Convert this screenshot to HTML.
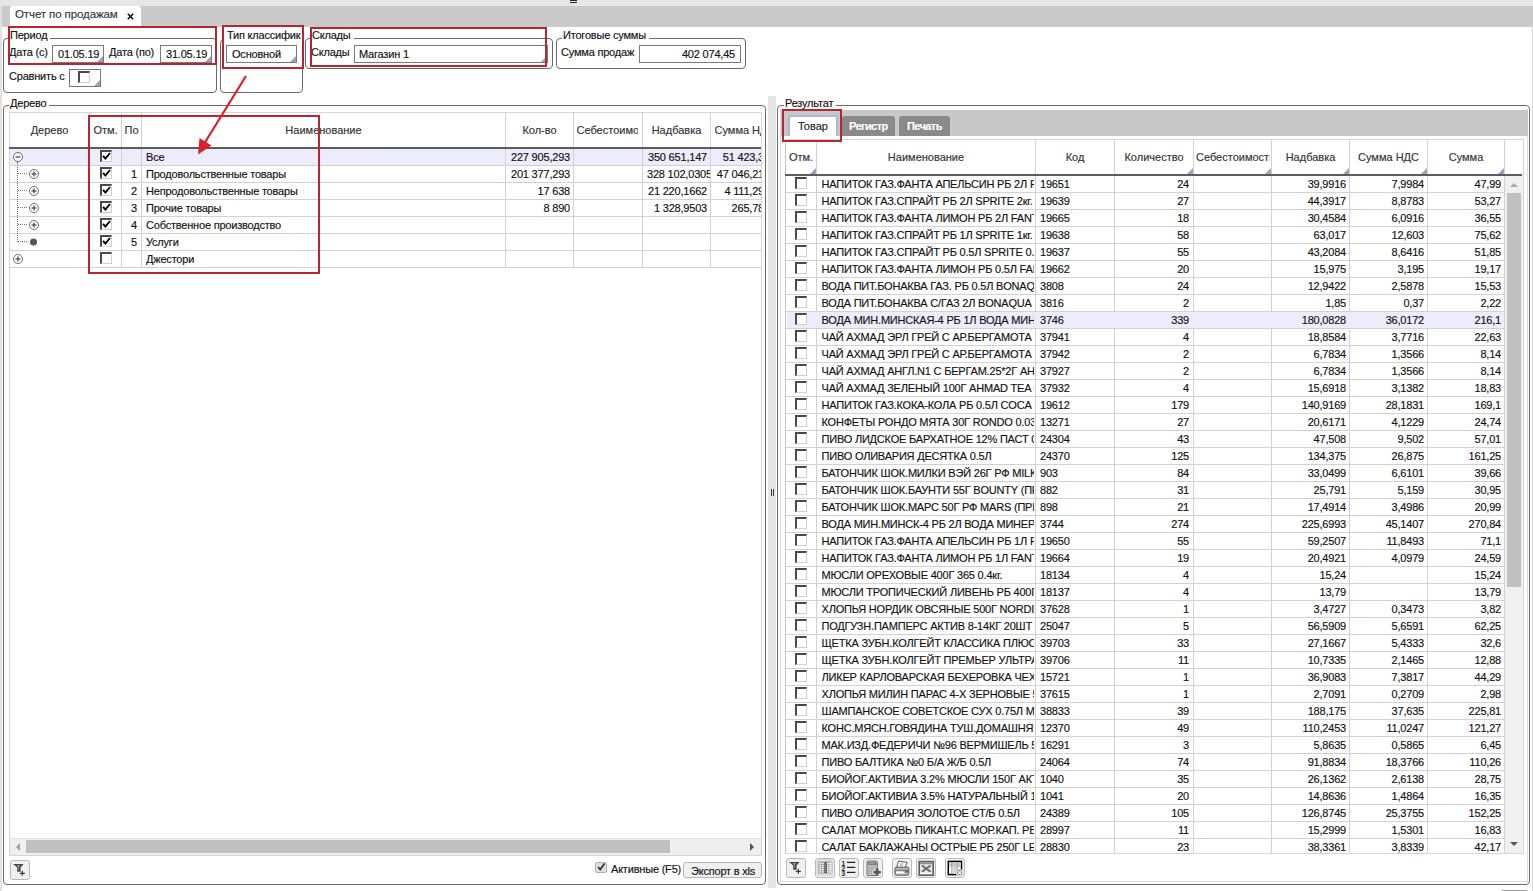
<!DOCTYPE html><html><head><meta charset="utf-8"><style>
*{box-sizing:border-box;margin:0;padding:0}
html,body{width:1533px;height:891px;overflow:hidden;background:#fff}
body{position:relative;font-family:"Liberation Sans",sans-serif;font-size:11px;letter-spacing:-0.2px;color:#111;-webkit-text-stroke:0.15px currentColor}
.ab{position:absolute}
.t{position:absolute;white-space:nowrap;line-height:13px}
.fs{position:absolute;border:1px solid #6a6a6a;border-radius:4px}
.lg{position:absolute;background:#fff;white-space:nowrap;line-height:13px;padding:0 3px 0 1px}
.inp{position:absolute;border:1px solid #7a7a7a;background:#fff;line-height:17px;white-space:nowrap;overflow:hidden}
.tri{position:absolute;right:0;bottom:0;width:0;height:0;border-style:solid;border-width:0 0 6px 6px;border-color:transparent transparent #8fa6c4 transparent}
.red{position:absolute;border:2px solid #b7262e}
.hl{position:absolute;background:#d2d2d2}
.vl{position:absolute;background:#d2d2d2}
.hd{position:absolute;color:#333;text-align:center;line-height:13px;white-space:nowrap;overflow:hidden;letter-spacing:0}
.c{position:absolute;line-height:13px;white-space:nowrap;overflow:hidden}
.r{text-align:right}
.cb{position:absolute;width:12px;height:12px;background:#fff;border-top:2px solid #4a4a4a;border-left:2px solid #4a4a4a;border-right:1px solid #cfcfcf;border-bottom:1px solid #cfcfcf}
.btn{position:absolute;background:#f0f0f0;border:1px solid #b8b8b8;border-radius:3px}
</style></head><body>
<div class="ab" style="left:0;top:0;width:1533px;height:6px;background:#e6e6e6"></div>
<div class="ab" style="left:570px;top:0;width:7px;height:1px;background:#222"></div>
<div class="ab" style="left:570px;top:2px;width:7px;height:1px;background:#222"></div>
<div class="ab" style="left:1px;top:6px;width:1532px;height:20.5px;background:#cacaca"></div>
<div class="ab" style="left:0;top:6px;width:1.5px;height:885px;background:#e2e2e2"></div>
<div class="ab" style="left:1532px;top:26px;width:1px;height:865px;background:#d8d8d8"></div>
<div class="ab" style="left:10px;top:6px;width:131px;height:20px;background:#fff;border-radius:3px 3px 0 0"></div>
<div class="t" style="left:15px;top:7px;font-size:11.5px;letter-spacing:-0.1px;color:#2e3640;line-height:14px">Отчет по продажам</div>
<svg class="ab" style="left:127px;top:13px" width="7" height="7" viewBox="0 0 7 7"><path d="M0.8 0.8L6.2 6.2M6.2 0.8L0.8 6.2" stroke="#111" stroke-width="1.6"/></svg>
<div class="fs" style="left:3px;top:38px;width:214px;height:55px"></div>
<div class="lg" style="left:9px;top:29px">Период</div>
<div class="t" style="left:9px;top:46px">Дата (с)</div>
<div class="inp" style="left:52px;top:45px;width:52px;height:18px;text-align:left;padding:0 5px">01.05.19<div class="tri"></div></div>
<div class="t" style="left:109px;top:46px">Дата (по)</div>
<div class="inp" style="left:160px;top:45px;width:52px;height:18px;text-align:left;padding:0 5px">31.05.19<div class="tri"></div></div>
<div class="t" style="left:9px;top:70px">Сравнить с</div>
<div class="inp" style="left:69px;top:69px;width:32px;height:18px;text-align:left;padding:0 0px"><div class="tri"></div></div>
<div class="cb" style="left:78px;top:71px;width:12px;height:12px"></div>
<div class="fs" style="left:220px;top:39px;width:83px;height:54px"></div>
<div class="lg" style="left:224px;top:29px;width:78px;padding:0 0 0 3px;overflow:hidden">Тип классифик</div>
<div class="inp" style="left:226px;top:45px;width:71px;height:18px;text-align:left;padding:0 5px">Основной<div class="tri"></div></div>
<div class="fs" style="left:305px;top:38px;width:248px;height:31px"></div>
<div class="lg" style="left:311px;top:29px">Склады</div>
<div class="t" style="left:311px;top:46px">Склады</div>
<div class="inp" style="left:354px;top:45px;width:194px;height:18px;text-align:left;padding:0 4px">Магазин 1<div class="tri"></div></div>
<div class="fs" style="left:556px;top:38px;width:190px;height:31px"></div>
<div class="lg" style="left:562px;top:29px">Итоговые суммы</div>
<div class="t" style="left:561px;top:46px">Сумма продаж</div>
<div class="inp" style="left:639px;top:45px;width:102px;height:18px;text-align:right;padding:0 5px">402 074,45</div>
<div class="fs" style="left:3px;top:105px;width:763px;height:780px"></div>
<div class="lg" style="left:9px;top:97px">Дерево</div>
<div class="ab" style="left:9px;top:112px;width:753px;height:744px;border:1px solid #d6d6d6;border-right:1px solid #d6d6d6;background:#fff"></div>
<div class="ab" style="left:9px;top:147px;width:752px;height:2px;background:#5c5c5c"></div>
<div class="ab" style="left:10px;top:149px;width:751px;height:16px;background:#ececfa"></div>
<div class="hd" style="left:10px;top:124px;width:79px;">Дерево</div>
<div class="hd" style="left:90px;top:124px;width:31px;">Отм.</div>
<div class="hd" style="left:122px;top:124px;width:19px;">По</div>
<div class="hd" style="left:142px;top:124px;width:363px;">Наименование</div>
<div class="hd" style="left:506px;top:124px;width:67px;">Кол-во</div>
<div class="hd" style="left:643px;top:124px;width:67px;">Надбавка</div>
<div class="hd" style="left:576.5px;top:124px;width:61.5px;text-align:left">Себестоимость</div>
<div class="hd" style="left:714.5px;top:124px;width:46.5px;text-align:left">Сумма НДС</div>
<div class="vl" style="left:89px;top:113px;width:1px;height:34px"></div>
<div class="vl" style="left:89px;top:149px;width:1px;height:118px"></div>
<div class="vl" style="left:121px;top:113px;width:1px;height:34px"></div>
<div class="vl" style="left:121px;top:149px;width:1px;height:118px"></div>
<div class="vl" style="left:141px;top:113px;width:1px;height:34px"></div>
<div class="vl" style="left:141px;top:149px;width:1px;height:118px"></div>
<div class="vl" style="left:505px;top:113px;width:1px;height:34px"></div>
<div class="vl" style="left:505px;top:149px;width:1px;height:118px"></div>
<div class="vl" style="left:573px;top:113px;width:1px;height:34px"></div>
<div class="vl" style="left:573px;top:149px;width:1px;height:118px"></div>
<div class="vl" style="left:642px;top:113px;width:1px;height:34px"></div>
<div class="vl" style="left:642px;top:149px;width:1px;height:118px"></div>
<div class="vl" style="left:710px;top:113px;width:1px;height:34px"></div>
<div class="vl" style="left:710px;top:149px;width:1px;height:118px"></div>
<div class="hl" style="left:10px;top:165px;width:751px;height:1px"></div>
<div class="hl" style="left:10px;top:182px;width:751px;height:1px"></div>
<div class="hl" style="left:10px;top:199px;width:751px;height:1px"></div>
<div class="hl" style="left:10px;top:216px;width:751px;height:1px"></div>
<div class="hl" style="left:10px;top:233px;width:751px;height:1px"></div>
<div class="hl" style="left:10px;top:250px;width:751px;height:1px"></div>
<div class="hl" style="left:10px;top:267px;width:751px;height:1px"></div>
<svg class="ab" style="left:11.5px;top:150.5px" width="12" height="12" viewBox="0 0 12 12"><circle cx="6" cy="6" r="4.5" fill="#fff" stroke="#6e6e6e" stroke-width="1"/><path d="M3.5 6H8.5" stroke="#444" stroke-width="1.2"/></svg>
<div class="cb" style="left:100px;top:150px"></div>
<svg class="ab" style="left:102px;top:152px" width="9" height="8" viewBox="0 0 9 8"><path d="M1 3.8L3.4 6.5L8 1" fill="none" stroke="#000" stroke-width="1.9"/></svg>
<div class="c" style="left:146px;top:151px;width:358px">Все</div>
<div class="c r" style="left:506px;top:151px;width:64px">227 905,293</div>
<div class="c r" style="left:643px;top:151px;width:64px">350 651,147</div>
<svg class="ab" style="left:27.5px;top:167.5px" width="12" height="12" viewBox="0 0 12 12"><circle cx="6" cy="6" r="4.5" fill="#fff" stroke="#6e6e6e" stroke-width="1"/><path d="M3.5 6H8.5" stroke="#444" stroke-width="1.2"/><path d="M6 3.5V8.5" stroke="#444" stroke-width="1.2"/></svg>
<div class="cb" style="left:100px;top:167px"></div>
<svg class="ab" style="left:102px;top:169px" width="9" height="8" viewBox="0 0 9 8"><path d="M1 3.8L3.4 6.5L8 1" fill="none" stroke="#000" stroke-width="1.9"/></svg>
<div class="c r" style="left:122px;top:168px;width:15px">1</div>
<div class="c" style="left:146px;top:168px;width:358px">Продовольственные товары</div>
<div class="c r" style="left:506px;top:168px;width:64px">201 377,293</div>
<div class="c" style="left:647px;top:168px;width:63px">328 102,0305</div>
<svg class="ab" style="left:27.5px;top:184.5px" width="12" height="12" viewBox="0 0 12 12"><circle cx="6" cy="6" r="4.5" fill="#fff" stroke="#6e6e6e" stroke-width="1"/><path d="M3.5 6H8.5" stroke="#444" stroke-width="1.2"/><path d="M6 3.5V8.5" stroke="#444" stroke-width="1.2"/></svg>
<div class="cb" style="left:100px;top:184px"></div>
<svg class="ab" style="left:102px;top:186px" width="9" height="8" viewBox="0 0 9 8"><path d="M1 3.8L3.4 6.5L8 1" fill="none" stroke="#000" stroke-width="1.9"/></svg>
<div class="c r" style="left:122px;top:185px;width:15px">2</div>
<div class="c" style="left:146px;top:185px;width:358px">Непродовольственные товары</div>
<div class="c r" style="left:506px;top:185px;width:64px">17 638</div>
<div class="c r" style="left:643px;top:185px;width:64px">21 220,1662</div>
<svg class="ab" style="left:27.5px;top:201.5px" width="12" height="12" viewBox="0 0 12 12"><circle cx="6" cy="6" r="4.5" fill="#fff" stroke="#6e6e6e" stroke-width="1"/><path d="M3.5 6H8.5" stroke="#444" stroke-width="1.2"/><path d="M6 3.5V8.5" stroke="#444" stroke-width="1.2"/></svg>
<div class="cb" style="left:100px;top:201px"></div>
<svg class="ab" style="left:102px;top:203px" width="9" height="8" viewBox="0 0 9 8"><path d="M1 3.8L3.4 6.5L8 1" fill="none" stroke="#000" stroke-width="1.9"/></svg>
<div class="c r" style="left:122px;top:202px;width:15px">3</div>
<div class="c" style="left:146px;top:202px;width:358px">Прочие товары</div>
<div class="c r" style="left:506px;top:202px;width:64px">8 890</div>
<div class="c r" style="left:643px;top:202px;width:64px">1 328,9503</div>
<svg class="ab" style="left:27.5px;top:218.5px" width="12" height="12" viewBox="0 0 12 12"><circle cx="6" cy="6" r="4.5" fill="#fff" stroke="#6e6e6e" stroke-width="1"/><path d="M3.5 6H8.5" stroke="#444" stroke-width="1.2"/><path d="M6 3.5V8.5" stroke="#444" stroke-width="1.2"/></svg>
<div class="cb" style="left:100px;top:218px"></div>
<svg class="ab" style="left:102px;top:220px" width="9" height="8" viewBox="0 0 9 8"><path d="M1 3.8L3.4 6.5L8 1" fill="none" stroke="#000" stroke-width="1.9"/></svg>
<div class="c r" style="left:122px;top:219px;width:15px">4</div>
<div class="c" style="left:146px;top:219px;width:358px">Собственное производство</div>
<svg class="ab" style="left:28px;top:235.5px" width="12" height="12" viewBox="0 0 12 12"><circle cx="5.5" cy="6" r="3.5" fill="#555"/></svg>
<div class="cb" style="left:100px;top:235px"></div>
<svg class="ab" style="left:102px;top:237px" width="9" height="8" viewBox="0 0 9 8"><path d="M1 3.8L3.4 6.5L8 1" fill="none" stroke="#000" stroke-width="1.9"/></svg>
<div class="c r" style="left:122px;top:236px;width:15px">5</div>
<div class="c" style="left:146px;top:236px;width:358px">Услуги</div>
<svg class="ab" style="left:11.5px;top:252.5px" width="12" height="12" viewBox="0 0 12 12"><circle cx="6" cy="6" r="4.5" fill="#fff" stroke="#6e6e6e" stroke-width="1"/><path d="M3.5 6H8.5" stroke="#444" stroke-width="1.2"/><path d="M6 3.5V8.5" stroke="#444" stroke-width="1.2"/></svg>
<div class="cb" style="left:100px;top:252px"></div>
<div class="c" style="left:146px;top:253px;width:358px">Джестори</div>
<div class="c" style="left:711px;top:151px;width:50px;height:14px"><div style="position:absolute;left:0;top:0;text-align:right;width:53px">51 423,3</div></div>
<div class="c" style="left:711px;top:168px;width:50px;height:14px"><div style="position:absolute;left:0;top:0;text-align:right;width:53px">47 046,21</div></div>
<div class="c" style="left:711px;top:185px;width:50px;height:14px"><div style="position:absolute;left:0;top:0;text-align:right;width:53px">4 111,29</div></div>
<div class="c" style="left:711px;top:202px;width:50px;height:14px"><div style="position:absolute;left:0;top:0;text-align:right;width:53px">265,78</div></div>
<div class="ab" style="left:17px;top:162px;width:1px;height:80px;border-left:1px dotted #777"></div>
<div class="ab" style="left:18px;top:173px;width:9px;height:1px;border-top:1px dotted #777"></div>
<div class="ab" style="left:18px;top:190px;width:9px;height:1px;border-top:1px dotted #777"></div>
<div class="ab" style="left:18px;top:207px;width:9px;height:1px;border-top:1px dotted #777"></div>
<div class="ab" style="left:18px;top:224px;width:9px;height:1px;border-top:1px dotted #777"></div>
<div class="ab" style="left:18px;top:241px;width:9px;height:1px;border-top:1px dotted #777"></div>
<div class="ab" style="left:10px;top:838px;width:751px;height:17px;background:#efefef;border-top:1px solid #e2e2e2"></div>
<div class="ab" style="left:26px;top:840px;width:644px;height:13px;background:#c0c0c0"></div>
<svg class="ab" style="left:14px;top:842px" width="8" height="10" viewBox="0 0 8 10"><path d="M6 1L2 5L6 9Z" fill="#a0a0a0"/></svg>
<svg class="ab" style="left:748px;top:842px" width="8" height="10" viewBox="0 0 8 10"><path d="M2 1L6 5L2 9Z" fill="#555"/></svg>
<div class="btn" style="left:10px;top:860px;width:20px;height:20px"></div>
<svg class="ab" style="left:10px;top:860px" width="20" height="20" viewBox="0 0 20 20"><path d="M3 4H13.6L10.6 7.6V11.8H7.2V7.6Z" fill="#3f4b4a"/><path d="M6.8 5.2H10L8.8 6.8V9.5H8.2V6.8Z" fill="#a9b4b3"/><path d="M9.8 13.3H14.8M12.3 10.8V15.8" stroke="#333" stroke-width="1.2"/></svg>
<div class="ab" style="left:595px;top:862px;width:12px;height:11px;background:#e0e0e0;border:1px solid #b0b0b0;border-radius:2px"></div>
<svg class="ab" style="left:596px;top:862px" width="10" height="10" viewBox="0 0 10 10"><path d="M2 5L4.2 7.5L8.5 1.5" fill="none" stroke="#333" stroke-width="1.8"/></svg>
<div class="t" style="left:611px;top:863px">Активные (F5)</div>
<div class="btn" style="left:683px;top:862px;width:79px;height:16px"></div>
<div class="t" style="left:691px;top:865px">Экспорт в xls</div>
<div class="ab" style="left:768px;top:96px;width:8px;height:792px;background:#e6e6e6"></div>
<div class="ab" style="left:771px;top:489px;width:1px;height:7px;background:#333"></div>
<div class="ab" style="left:773px;top:489px;width:1px;height:7px;background:#333"></div>
<div class="fs" style="left:777px;top:105px;width:753px;height:780px"></div>
<div class="lg" style="left:784px;top:97px">Результат</div>
<div class="ab" style="left:780px;top:109px;width:748px;height:773px;border:1px solid #dcdcdc;border-top:none"></div>
<div class="ab" style="left:781px;top:110px;width:747px;height:26px;background:#c8c8c8"></div>
<div class="ab" style="left:788px;top:115px;width:50px;height:21px;background:#fff;border:2px solid #a9b9de;border-bottom:none;border-radius:3px 3px 0 0"></div>
<div class="t" style="left:798px;top:120px;color:#222;letter-spacing:0">Товар</div>
<div class="ab" style="left:842px;top:116px;width:53px;height:20px;background:#8a8a8a;border-radius:3px 3px 0 0"></div>
<div class="t" style="left:849px;top:120px;color:#fff;font-weight:bold;letter-spacing:-0.6px">Регистр</div>
<div class="ab" style="left:899px;top:116px;width:51px;height:20px;background:#8a8a8a;border-radius:3px 3px 0 0"></div>
<div class="t" style="left:907px;top:120px;color:#fff;font-weight:bold;letter-spacing:-0.6px">Печать</div>
<div class="ab" style="left:785px;top:139px;width:739px;height:715px;border:1px solid #d6d6d6;border-left:1px solid #c4c4c4"></div>
<div class="ab" style="left:785px;top:174px;width:737px;height:2px;background:#5c5c5c"></div>
<div class="hd" style="left:786px;top:151px;width:30px">Отм.</div>
<div class="tri" style="left:810px;top:168px;right:auto;bottom:auto"></div>
<div class="hd" style="left:817px;top:151px;width:218px">Наименование</div>
<div class="hd" style="left:1036px;top:151px;width:78px">Код</div>
<div class="hd" style="left:1115px;top:151px;width:78px">Количество</div>
<div class="tri" style="left:1187px;top:168px;right:auto;bottom:auto"></div>
<div class="hd" style="left:1196px;top:151px;width:74px;text-align:left">Себестоимость</div>
<div class="tri" style="left:1265px;top:168px;right:auto;bottom:auto"></div>
<div class="hd" style="left:1272px;top:151px;width:77px">Надбавка</div>
<div class="tri" style="left:1343px;top:168px;right:auto;bottom:auto"></div>
<div class="hd" style="left:1350px;top:151px;width:77px">Сумма НДС</div>
<div class="tri" style="left:1421px;top:168px;right:auto;bottom:auto"></div>
<div class="hd" style="left:1428px;top:151px;width:76px">Сумма</div>
<div class="tri" style="left:1498px;top:168px;right:auto;bottom:auto"></div>
<div class="vl" style="left:816px;top:140px;width:1px;height:34px"></div>
<div class="vl" style="left:816px;top:176px;width:1px;height:677px"></div>
<div class="vl" style="left:1035px;top:140px;width:1px;height:34px"></div>
<div class="vl" style="left:1035px;top:176px;width:1px;height:677px"></div>
<div class="vl" style="left:1114px;top:140px;width:1px;height:34px"></div>
<div class="vl" style="left:1114px;top:176px;width:1px;height:677px"></div>
<div class="vl" style="left:1193px;top:140px;width:1px;height:34px"></div>
<div class="vl" style="left:1193px;top:176px;width:1px;height:677px"></div>
<div class="vl" style="left:1271px;top:140px;width:1px;height:34px"></div>
<div class="vl" style="left:1271px;top:176px;width:1px;height:677px"></div>
<div class="vl" style="left:1349px;top:140px;width:1px;height:34px"></div>
<div class="vl" style="left:1349px;top:176px;width:1px;height:677px"></div>
<div class="vl" style="left:1427px;top:140px;width:1px;height:34px"></div>
<div class="vl" style="left:1427px;top:176px;width:1px;height:677px"></div>
<div class="vl" style="left:1504px;top:140px;width:1px;height:34px"></div>
<div class="vl" style="left:1504px;top:176px;width:1px;height:677px"></div>
<div class="ab" style="left:787px;top:312px;width:717px;height:17px;background:#ececfa"></div>
<div class="hl" style="left:786px;top:192px;width:718px;height:1px"></div>
<div class="cb" style="left:795px;top:177px;width:12px;height:12px"></div>
<div class="c" style="left:821.5px;top:178px;width:212.5px">НАПИТОК ГАЗ.ФАНТА АПЕЛЬСИН РБ 2Л FANTA 2кг.</div>
<div class="c" style="left:1040px;top:178px;width:74px">19651</div>
<div class="c r" style="left:1115px;top:178px;width:74px">24</div>
<div class="c r" style="left:1272px;top:178px;width:74px">39,9916</div>
<div class="c r" style="left:1350px;top:178px;width:74px">7,9984</div>
<div class="c r" style="left:1428px;top:178px;width:73px">47,99</div>
<div class="hl" style="left:786px;top:209px;width:718px;height:1px"></div>
<div class="cb" style="left:795px;top:194px;width:12px;height:12px"></div>
<div class="c" style="left:821.5px;top:195px;width:212.5px">НАПИТОК ГАЗ.СПРАЙТ РБ 2Л SPRITE 2кг. </div>
<div class="c" style="left:1040px;top:195px;width:74px">19639</div>
<div class="c r" style="left:1115px;top:195px;width:74px">27</div>
<div class="c r" style="left:1272px;top:195px;width:74px">44,3917</div>
<div class="c r" style="left:1350px;top:195px;width:74px">8,8783</div>
<div class="c r" style="left:1428px;top:195px;width:73px">53,27</div>
<div class="hl" style="left:786px;top:226px;width:718px;height:1px"></div>
<div class="cb" style="left:795px;top:211px;width:12px;height:12px"></div>
<div class="c" style="left:821.5px;top:212px;width:212.5px">НАПИТОК ГАЗ.ФАНТА ЛИМОН РБ 2Л FANTA</div>
<div class="c" style="left:1040px;top:212px;width:74px">19665</div>
<div class="c r" style="left:1115px;top:212px;width:74px">18</div>
<div class="c r" style="left:1272px;top:212px;width:74px">30,4584</div>
<div class="c r" style="left:1350px;top:212px;width:74px">6,0916</div>
<div class="c r" style="left:1428px;top:212px;width:73px">36,55</div>
<div class="hl" style="left:786px;top:243px;width:718px;height:1px"></div>
<div class="cb" style="left:795px;top:228px;width:12px;height:12px"></div>
<div class="c" style="left:821.5px;top:229px;width:212.5px">НАПИТОК ГАЗ.СПРАЙТ РБ 1Л SPRITE 1кг.</div>
<div class="c" style="left:1040px;top:229px;width:74px">19638</div>
<div class="c r" style="left:1115px;top:229px;width:74px">58</div>
<div class="c r" style="left:1272px;top:229px;width:74px">63,017</div>
<div class="c r" style="left:1350px;top:229px;width:74px">12,603</div>
<div class="c r" style="left:1428px;top:229px;width:73px">75,62</div>
<div class="hl" style="left:786px;top:260px;width:718px;height:1px"></div>
<div class="cb" style="left:795px;top:245px;width:12px;height:12px"></div>
<div class="c" style="left:821.5px;top:246px;width:212.5px">НАПИТОК ГАЗ.СПРАЙТ РБ 0.5Л SPRITE 0.5кг.</div>
<div class="c" style="left:1040px;top:246px;width:74px">19637</div>
<div class="c r" style="left:1115px;top:246px;width:74px">55</div>
<div class="c r" style="left:1272px;top:246px;width:74px">43,2084</div>
<div class="c r" style="left:1350px;top:246px;width:74px">8,6416</div>
<div class="c r" style="left:1428px;top:246px;width:73px">51,85</div>
<div class="hl" style="left:786px;top:277px;width:718px;height:1px"></div>
<div class="cb" style="left:795px;top:262px;width:12px;height:12px"></div>
<div class="c" style="left:821.5px;top:263px;width:212.5px">НАПИТОК ГАЗ.ФАНТА ЛИМОН РБ 0.5Л FANTA</div>
<div class="c" style="left:1040px;top:263px;width:74px">19662</div>
<div class="c r" style="left:1115px;top:263px;width:74px">20</div>
<div class="c r" style="left:1272px;top:263px;width:74px">15,975</div>
<div class="c r" style="left:1350px;top:263px;width:74px">3,195</div>
<div class="c r" style="left:1428px;top:263px;width:73px">19,17</div>
<div class="hl" style="left:786px;top:294px;width:718px;height:1px"></div>
<div class="cb" style="left:795px;top:279px;width:12px;height:12px"></div>
<div class="c" style="left:821.5px;top:280px;width:212.5px">ВОДА ПИТ.БОНАКВА ГАЗ. РБ 0.5Л BONAQUA</div>
<div class="c" style="left:1040px;top:280px;width:74px">3808</div>
<div class="c r" style="left:1115px;top:280px;width:74px">24</div>
<div class="c r" style="left:1272px;top:280px;width:74px">12,9422</div>
<div class="c r" style="left:1350px;top:280px;width:74px">2,5878</div>
<div class="c r" style="left:1428px;top:280px;width:73px">15,53</div>
<div class="hl" style="left:786px;top:311px;width:718px;height:1px"></div>
<div class="cb" style="left:795px;top:296px;width:12px;height:12px"></div>
<div class="c" style="left:821.5px;top:297px;width:212.5px">ВОДА ПИТ.БОНАКВА С/ГАЗ 2Л BONAQUA 2кг.</div>
<div class="c" style="left:1040px;top:297px;width:74px">3816</div>
<div class="c r" style="left:1115px;top:297px;width:74px">2</div>
<div class="c r" style="left:1272px;top:297px;width:74px">1,85</div>
<div class="c r" style="left:1350px;top:297px;width:74px">0,37</div>
<div class="c r" style="left:1428px;top:297px;width:73px">2,22</div>
<div class="hl" style="left:786px;top:328px;width:718px;height:1px"></div>
<div class="cb" style="left:795px;top:313px;width:12px;height:12px"></div>
<div class="c" style="left:821.5px;top:314px;width:212.5px">ВОДА МИН.МИНСКАЯ-4 РБ 1Л ВОДА МИНЕРАЛЬНАЯ</div>
<div class="c" style="left:1040px;top:314px;width:74px">3746</div>
<div class="c r" style="left:1115px;top:314px;width:74px">339</div>
<div class="c r" style="left:1272px;top:314px;width:74px">180,0828</div>
<div class="c r" style="left:1350px;top:314px;width:74px">36,0172</div>
<div class="c r" style="left:1428px;top:314px;width:73px">216,1</div>
<div class="hl" style="left:786px;top:345px;width:718px;height:1px"></div>
<div class="cb" style="left:795px;top:330px;width:12px;height:12px"></div>
<div class="c" style="left:821.5px;top:331px;width:212.5px">ЧАЙ АХМАД ЭРЛ ГРЕЙ С АР.БЕРГАМОТА 100Г</div>
<div class="c" style="left:1040px;top:331px;width:74px">37941</div>
<div class="c r" style="left:1115px;top:331px;width:74px">4</div>
<div class="c r" style="left:1272px;top:331px;width:74px">18,8584</div>
<div class="c r" style="left:1350px;top:331px;width:74px">3,7716</div>
<div class="c r" style="left:1428px;top:331px;width:73px">22,63</div>
<div class="hl" style="left:786px;top:362px;width:718px;height:1px"></div>
<div class="cb" style="left:795px;top:347px;width:12px;height:12px"></div>
<div class="c" style="left:821.5px;top:348px;width:212.5px">ЧАЙ АХМАД ЭРЛ ГРЕЙ С АР.БЕРГАМОТА 25П</div>
<div class="c" style="left:1040px;top:348px;width:74px">37942</div>
<div class="c r" style="left:1115px;top:348px;width:74px">2</div>
<div class="c r" style="left:1272px;top:348px;width:74px">6,7834</div>
<div class="c r" style="left:1350px;top:348px;width:74px">1,3566</div>
<div class="c r" style="left:1428px;top:348px;width:73px">8,14</div>
<div class="hl" style="left:786px;top:379px;width:718px;height:1px"></div>
<div class="cb" style="left:795px;top:364px;width:12px;height:12px"></div>
<div class="c" style="left:821.5px;top:365px;width:212.5px">ЧАЙ АХМАД АНГЛ.N1 С БЕРГАМ.25*2Г AHMAD</div>
<div class="c" style="left:1040px;top:365px;width:74px">37927</div>
<div class="c r" style="left:1115px;top:365px;width:74px">2</div>
<div class="c r" style="left:1272px;top:365px;width:74px">6,7834</div>
<div class="c r" style="left:1350px;top:365px;width:74px">1,3566</div>
<div class="c r" style="left:1428px;top:365px;width:73px">8,14</div>
<div class="hl" style="left:786px;top:396px;width:718px;height:1px"></div>
<div class="cb" style="left:795px;top:381px;width:12px;height:12px"></div>
<div class="c" style="left:821.5px;top:382px;width:212.5px">ЧАЙ АХМАД ЗЕЛЕНЫЙ 100Г AHMAD TEA 0.1</div>
<div class="c" style="left:1040px;top:382px;width:74px">37932</div>
<div class="c r" style="left:1115px;top:382px;width:74px">4</div>
<div class="c r" style="left:1272px;top:382px;width:74px">15,6918</div>
<div class="c r" style="left:1350px;top:382px;width:74px">3,1382</div>
<div class="c r" style="left:1428px;top:382px;width:73px">18,83</div>
<div class="hl" style="left:786px;top:413px;width:718px;height:1px"></div>
<div class="cb" style="left:795px;top:398px;width:12px;height:12px"></div>
<div class="c" style="left:821.5px;top:399px;width:212.5px">НАПИТОК ГАЗ.КОКА-КОЛА РБ 0.5Л COCA COLA</div>
<div class="c" style="left:1040px;top:399px;width:74px">19612</div>
<div class="c r" style="left:1115px;top:399px;width:74px">179</div>
<div class="c r" style="left:1272px;top:399px;width:74px">140,9169</div>
<div class="c r" style="left:1350px;top:399px;width:74px">28,1831</div>
<div class="c r" style="left:1428px;top:399px;width:73px">169,1</div>
<div class="hl" style="left:786px;top:430px;width:718px;height:1px"></div>
<div class="cb" style="left:795px;top:415px;width:12px;height:12px"></div>
<div class="c" style="left:821.5px;top:416px;width:212.5px">КОНФЕТЫ РОНДО МЯТА 30Г RONDO 0.03кг.</div>
<div class="c" style="left:1040px;top:416px;width:74px">13271</div>
<div class="c r" style="left:1115px;top:416px;width:74px">27</div>
<div class="c r" style="left:1272px;top:416px;width:74px">20,6171</div>
<div class="c r" style="left:1350px;top:416px;width:74px">4,1229</div>
<div class="c r" style="left:1428px;top:416px;width:73px">24,74</div>
<div class="hl" style="left:786px;top:447px;width:718px;height:1px"></div>
<div class="cb" style="left:795px;top:432px;width:12px;height:12px"></div>
<div class="c" style="left:821.5px;top:433px;width:212.5px">ПИВО ЛИДСКОЕ БАРХАТНОЕ 12% ПАСТ 0.5Л</div>
<div class="c" style="left:1040px;top:433px;width:74px">24304</div>
<div class="c r" style="left:1115px;top:433px;width:74px">43</div>
<div class="c r" style="left:1272px;top:433px;width:74px">47,508</div>
<div class="c r" style="left:1350px;top:433px;width:74px">9,502</div>
<div class="c r" style="left:1428px;top:433px;width:73px">57,01</div>
<div class="hl" style="left:786px;top:464px;width:718px;height:1px"></div>
<div class="cb" style="left:795px;top:449px;width:12px;height:12px"></div>
<div class="c" style="left:821.5px;top:450px;width:212.5px">ПИВО ОЛИВАРИЯ ДЕСЯТКА 0.5Л</div>
<div class="c" style="left:1040px;top:450px;width:74px">24370</div>
<div class="c r" style="left:1115px;top:450px;width:74px">125</div>
<div class="c r" style="left:1272px;top:450px;width:74px">134,375</div>
<div class="c r" style="left:1350px;top:450px;width:74px">26,875</div>
<div class="c r" style="left:1428px;top:450px;width:73px">161,25</div>
<div class="hl" style="left:786px;top:481px;width:718px;height:1px"></div>
<div class="cb" style="left:795px;top:466px;width:12px;height:12px"></div>
<div class="c" style="left:821.5px;top:467px;width:212.5px">БАТОНЧИК ШОК.МИЛКИ ВЭЙ 26Г РФ MILKY WAY</div>
<div class="c" style="left:1040px;top:467px;width:74px">903</div>
<div class="c r" style="left:1115px;top:467px;width:74px">84</div>
<div class="c r" style="left:1272px;top:467px;width:74px">33,0499</div>
<div class="c r" style="left:1350px;top:467px;width:74px">6,6101</div>
<div class="c r" style="left:1428px;top:467px;width:73px">39,66</div>
<div class="hl" style="left:786px;top:498px;width:718px;height:1px"></div>
<div class="cb" style="left:795px;top:483px;width:12px;height:12px"></div>
<div class="c" style="left:821.5px;top:484px;width:212.5px">БАТОНЧИК ШОК.БАУНТИ 55Г BOUNTY (ПРИ)</div>
<div class="c" style="left:1040px;top:484px;width:74px">882</div>
<div class="c r" style="left:1115px;top:484px;width:74px">31</div>
<div class="c r" style="left:1272px;top:484px;width:74px">25,791</div>
<div class="c r" style="left:1350px;top:484px;width:74px">5,159</div>
<div class="c r" style="left:1428px;top:484px;width:73px">30,95</div>
<div class="hl" style="left:786px;top:515px;width:718px;height:1px"></div>
<div class="cb" style="left:795px;top:500px;width:12px;height:12px"></div>
<div class="c" style="left:821.5px;top:501px;width:212.5px">БАТОНЧИК ШОК.МАРС 50Г РФ MARS (ПРИ)</div>
<div class="c" style="left:1040px;top:501px;width:74px">898</div>
<div class="c r" style="left:1115px;top:501px;width:74px">21</div>
<div class="c r" style="left:1272px;top:501px;width:74px">17,4914</div>
<div class="c r" style="left:1350px;top:501px;width:74px">3,4986</div>
<div class="c r" style="left:1428px;top:501px;width:73px">20,99</div>
<div class="hl" style="left:786px;top:532px;width:718px;height:1px"></div>
<div class="cb" style="left:795px;top:517px;width:12px;height:12px"></div>
<div class="c" style="left:821.5px;top:518px;width:212.5px">ВОДА МИН.МИНСК-4 РБ 2Л ВОДА МИНЕРАЛЬНАЯ</div>
<div class="c" style="left:1040px;top:518px;width:74px">3744</div>
<div class="c r" style="left:1115px;top:518px;width:74px">274</div>
<div class="c r" style="left:1272px;top:518px;width:74px">225,6993</div>
<div class="c r" style="left:1350px;top:518px;width:74px">45,1407</div>
<div class="c r" style="left:1428px;top:518px;width:73px">270,84</div>
<div class="hl" style="left:786px;top:549px;width:718px;height:1px"></div>
<div class="cb" style="left:795px;top:534px;width:12px;height:12px"></div>
<div class="c" style="left:821.5px;top:535px;width:212.5px">НАПИТОК ГАЗ.ФАНТА АПЕЛЬСИН РБ 1Л FANTA</div>
<div class="c" style="left:1040px;top:535px;width:74px">19650</div>
<div class="c r" style="left:1115px;top:535px;width:74px">55</div>
<div class="c r" style="left:1272px;top:535px;width:74px">59,2507</div>
<div class="c r" style="left:1350px;top:535px;width:74px">11,8493</div>
<div class="c r" style="left:1428px;top:535px;width:73px">71,1</div>
<div class="hl" style="left:786px;top:566px;width:718px;height:1px"></div>
<div class="cb" style="left:795px;top:551px;width:12px;height:12px"></div>
<div class="c" style="left:821.5px;top:552px;width:212.5px">НАПИТОК ГАЗ.ФАНТА ЛИМОН РБ 1Л FANTA</div>
<div class="c" style="left:1040px;top:552px;width:74px">19664</div>
<div class="c r" style="left:1115px;top:552px;width:74px">19</div>
<div class="c r" style="left:1272px;top:552px;width:74px">20,4921</div>
<div class="c r" style="left:1350px;top:552px;width:74px">4,0979</div>
<div class="c r" style="left:1428px;top:552px;width:73px">24,59</div>
<div class="hl" style="left:786px;top:583px;width:718px;height:1px"></div>
<div class="cb" style="left:795px;top:568px;width:12px;height:12px"></div>
<div class="c" style="left:821.5px;top:569px;width:212.5px">МЮСЛИ ОРЕХОВЫЕ 400Г 365 0.4кг.</div>
<div class="c" style="left:1040px;top:569px;width:74px">18134</div>
<div class="c r" style="left:1115px;top:569px;width:74px">4</div>
<div class="c r" style="left:1272px;top:569px;width:74px">15,24</div>
<div class="c r" style="left:1350px;top:569px;width:74px"></div>
<div class="c r" style="left:1428px;top:569px;width:73px">15,24</div>
<div class="hl" style="left:786px;top:600px;width:718px;height:1px"></div>
<div class="cb" style="left:795px;top:585px;width:12px;height:12px"></div>
<div class="c" style="left:821.5px;top:586px;width:212.5px">МЮСЛИ ТРОПИЧЕСКИЙ ЛИВЕНЬ РБ 400Г</div>
<div class="c" style="left:1040px;top:586px;width:74px">18137</div>
<div class="c r" style="left:1115px;top:586px;width:74px">4</div>
<div class="c r" style="left:1272px;top:586px;width:74px">13,79</div>
<div class="c r" style="left:1350px;top:586px;width:74px"></div>
<div class="c r" style="left:1428px;top:586px;width:73px">13,79</div>
<div class="hl" style="left:786px;top:617px;width:718px;height:1px"></div>
<div class="cb" style="left:795px;top:602px;width:12px;height:12px"></div>
<div class="c" style="left:821.5px;top:603px;width:212.5px">ХЛОПЬЯ НОРДИК ОВСЯНЫЕ 500Г NORDIC</div>
<div class="c" style="left:1040px;top:603px;width:74px">37628</div>
<div class="c r" style="left:1115px;top:603px;width:74px">1</div>
<div class="c r" style="left:1272px;top:603px;width:74px">3,4727</div>
<div class="c r" style="left:1350px;top:603px;width:74px">0,3473</div>
<div class="c r" style="left:1428px;top:603px;width:73px">3,82</div>
<div class="hl" style="left:786px;top:634px;width:718px;height:1px"></div>
<div class="cb" style="left:795px;top:619px;width:12px;height:12px"></div>
<div class="c" style="left:821.5px;top:620px;width:212.5px">ПОДГУЗН.ПАМПЕРС АКТИВ 8-14КГ 20ШТ</div>
<div class="c" style="left:1040px;top:620px;width:74px">25047</div>
<div class="c r" style="left:1115px;top:620px;width:74px">5</div>
<div class="c r" style="left:1272px;top:620px;width:74px">56,5909</div>
<div class="c r" style="left:1350px;top:620px;width:74px">5,6591</div>
<div class="c r" style="left:1428px;top:620px;width:73px">62,25</div>
<div class="hl" style="left:786px;top:651px;width:718px;height:1px"></div>
<div class="cb" style="left:795px;top:636px;width:12px;height:12px"></div>
<div class="c" style="left:821.5px;top:637px;width:212.5px">ЩЕТКА ЗУБН.КОЛГЕЙТ КЛАССИКА ПЛЮС</div>
<div class="c" style="left:1040px;top:637px;width:74px">39703</div>
<div class="c r" style="left:1115px;top:637px;width:74px">33</div>
<div class="c r" style="left:1272px;top:637px;width:74px">27,1667</div>
<div class="c r" style="left:1350px;top:637px;width:74px">5,4333</div>
<div class="c r" style="left:1428px;top:637px;width:73px">32,6</div>
<div class="hl" style="left:786px;top:668px;width:718px;height:1px"></div>
<div class="cb" style="left:795px;top:653px;width:12px;height:12px"></div>
<div class="c" style="left:821.5px;top:654px;width:212.5px">ЩЕТКА ЗУБН.КОЛГЕЙТ ПРЕМЬЕР УЛЬТРА</div>
<div class="c" style="left:1040px;top:654px;width:74px">39706</div>
<div class="c r" style="left:1115px;top:654px;width:74px">11</div>
<div class="c r" style="left:1272px;top:654px;width:74px">10,7335</div>
<div class="c r" style="left:1350px;top:654px;width:74px">2,1465</div>
<div class="c r" style="left:1428px;top:654px;width:73px">12,88</div>
<div class="hl" style="left:786px;top:685px;width:718px;height:1px"></div>
<div class="cb" style="left:795px;top:670px;width:12px;height:12px"></div>
<div class="c" style="left:821.5px;top:671px;width:212.5px">ЛИКЕР КАРЛОВАРСКАЯ БЕХЕРОВКА ЧЕХИЯ</div>
<div class="c" style="left:1040px;top:671px;width:74px">15721</div>
<div class="c r" style="left:1115px;top:671px;width:74px">1</div>
<div class="c r" style="left:1272px;top:671px;width:74px">36,9083</div>
<div class="c r" style="left:1350px;top:671px;width:74px">7,3817</div>
<div class="c r" style="left:1428px;top:671px;width:73px">44,29</div>
<div class="hl" style="left:786px;top:702px;width:718px;height:1px"></div>
<div class="cb" style="left:795px;top:687px;width:12px;height:12px"></div>
<div class="c" style="left:821.5px;top:688px;width:212.5px">ХЛОПЬЯ МИЛИН ПАРАС 4-Х ЗЕРНОВЫЕ 500Г</div>
<div class="c" style="left:1040px;top:688px;width:74px">37615</div>
<div class="c r" style="left:1115px;top:688px;width:74px">1</div>
<div class="c r" style="left:1272px;top:688px;width:74px">2,7091</div>
<div class="c r" style="left:1350px;top:688px;width:74px">0,2709</div>
<div class="c r" style="left:1428px;top:688px;width:73px">2,98</div>
<div class="hl" style="left:786px;top:719px;width:718px;height:1px"></div>
<div class="cb" style="left:795px;top:704px;width:12px;height:12px"></div>
<div class="c" style="left:821.5px;top:705px;width:212.5px">ШАМПАНСКОЕ СОВЕТСКОЕ СУХ 0.75Л МИНСК</div>
<div class="c" style="left:1040px;top:705px;width:74px">38833</div>
<div class="c r" style="left:1115px;top:705px;width:74px">39</div>
<div class="c r" style="left:1272px;top:705px;width:74px">188,175</div>
<div class="c r" style="left:1350px;top:705px;width:74px">37,635</div>
<div class="c r" style="left:1428px;top:705px;width:73px">225,81</div>
<div class="hl" style="left:786px;top:736px;width:718px;height:1px"></div>
<div class="cb" style="left:795px;top:721px;width:12px;height:12px"></div>
<div class="c" style="left:821.5px;top:722px;width:212.5px">КОНС.МЯСН.ГОВЯДИНА ТУШ.ДОМАШНЯЯ</div>
<div class="c" style="left:1040px;top:722px;width:74px">12370</div>
<div class="c r" style="left:1115px;top:722px;width:74px">49</div>
<div class="c r" style="left:1272px;top:722px;width:74px">110,2453</div>
<div class="c r" style="left:1350px;top:722px;width:74px">11,0247</div>
<div class="c r" style="left:1428px;top:722px;width:73px">121,27</div>
<div class="hl" style="left:786px;top:753px;width:718px;height:1px"></div>
<div class="cb" style="left:795px;top:738px;width:12px;height:12px"></div>
<div class="c" style="left:821.5px;top:739px;width:212.5px">МАК.ИЗД.ФЕДЕРИЧИ №96 ВЕРМИШЕЛЬ 500Г</div>
<div class="c" style="left:1040px;top:739px;width:74px">16291</div>
<div class="c r" style="left:1115px;top:739px;width:74px">3</div>
<div class="c r" style="left:1272px;top:739px;width:74px">5,8635</div>
<div class="c r" style="left:1350px;top:739px;width:74px">0,5865</div>
<div class="c r" style="left:1428px;top:739px;width:73px">6,45</div>
<div class="hl" style="left:786px;top:770px;width:718px;height:1px"></div>
<div class="cb" style="left:795px;top:755px;width:12px;height:12px"></div>
<div class="c" style="left:821.5px;top:756px;width:212.5px">ПИВО БАЛТИКА №0 Б/А Ж/Б 0.5Л</div>
<div class="c" style="left:1040px;top:756px;width:74px">24064</div>
<div class="c r" style="left:1115px;top:756px;width:74px">74</div>
<div class="c r" style="left:1272px;top:756px;width:74px">91,8834</div>
<div class="c r" style="left:1350px;top:756px;width:74px">18,3766</div>
<div class="c r" style="left:1428px;top:756px;width:73px">110,26</div>
<div class="hl" style="left:786px;top:787px;width:718px;height:1px"></div>
<div class="cb" style="left:795px;top:772px;width:12px;height:12px"></div>
<div class="c" style="left:821.5px;top:773px;width:212.5px">БИОЙОГ.АКТИВИА 3.2% МЮСЛИ 150Г АКТИВИА</div>
<div class="c" style="left:1040px;top:773px;width:74px">1040</div>
<div class="c r" style="left:1115px;top:773px;width:74px">35</div>
<div class="c r" style="left:1272px;top:773px;width:74px">26,1362</div>
<div class="c r" style="left:1350px;top:773px;width:74px">2,6138</div>
<div class="c r" style="left:1428px;top:773px;width:73px">28,75</div>
<div class="hl" style="left:786px;top:804px;width:718px;height:1px"></div>
<div class="cb" style="left:795px;top:789px;width:12px;height:12px"></div>
<div class="c" style="left:821.5px;top:790px;width:212.5px">БИОЙОГ.АКТИВИА 3.5% НАТУРАЛЬНЫЙ 150Г</div>
<div class="c" style="left:1040px;top:790px;width:74px">1041</div>
<div class="c r" style="left:1115px;top:790px;width:74px">20</div>
<div class="c r" style="left:1272px;top:790px;width:74px">14,8636</div>
<div class="c r" style="left:1350px;top:790px;width:74px">1,4864</div>
<div class="c r" style="left:1428px;top:790px;width:73px">16,35</div>
<div class="hl" style="left:786px;top:821px;width:718px;height:1px"></div>
<div class="cb" style="left:795px;top:806px;width:12px;height:12px"></div>
<div class="c" style="left:821.5px;top:807px;width:212.5px">ПИВО ОЛИВАРИЯ ЗОЛОТОЕ СТ/Б 0.5Л</div>
<div class="c" style="left:1040px;top:807px;width:74px">24389</div>
<div class="c r" style="left:1115px;top:807px;width:74px">105</div>
<div class="c r" style="left:1272px;top:807px;width:74px">126,8745</div>
<div class="c r" style="left:1350px;top:807px;width:74px">25,3755</div>
<div class="c r" style="left:1428px;top:807px;width:73px">152,25</div>
<div class="hl" style="left:786px;top:838px;width:718px;height:1px"></div>
<div class="cb" style="left:795px;top:823px;width:12px;height:12px"></div>
<div class="c" style="left:821.5px;top:824px;width:212.5px">САЛАТ МОРКОВЬ ПИКАНТ.С МОР.КАП. РБ 250Г</div>
<div class="c" style="left:1040px;top:824px;width:74px">28997</div>
<div class="c r" style="left:1115px;top:824px;width:74px">11</div>
<div class="c r" style="left:1272px;top:824px;width:74px">15,2999</div>
<div class="c r" style="left:1350px;top:824px;width:74px">1,5301</div>
<div class="c r" style="left:1428px;top:824px;width:73px">16,83</div>
<div class="cb" style="left:795px;top:840px;width:12px;height:12px"></div>
<div class="c" style="left:821.5px;top:841px;width:212.5px">САЛАТ БАКЛАЖАНЫ ОСТРЫЕ РБ 250Г LEDO</div>
<div class="c" style="left:1040px;top:841px;width:74px">28830</div>
<div class="c r" style="left:1115px;top:841px;width:74px">23</div>
<div class="c r" style="left:1272px;top:841px;width:74px">38,3361</div>
<div class="c r" style="left:1350px;top:841px;width:74px">3,8339</div>
<div class="c r" style="left:1428px;top:841px;width:73px">42,17</div>
<div class="ab" style="left:1505px;top:176px;width:18px;height:677px;background:#f0f0f0"></div>
<div class="ab" style="left:1507px;top:193px;width:14px;height:394px;background:#c0c0c0"></div>
<svg class="ab" style="left:1509px;top:181px" width="10" height="8" viewBox="0 0 10 8"><path d="M1 6L5 2L9 6Z" fill="#aaa"/></svg>
<svg class="ab" style="left:1509px;top:840px" width="10" height="8" viewBox="0 0 10 8"><path d="M1 2L5 6L9 2Z" fill="#555"/></svg>
<div class="btn" style="left:786px;top:858px;width:20px;height:20px"></div>
<svg class="ab" style="left:786px;top:858px" width="20" height="20" viewBox="0 0 20 20"><path d="M3 4H13.6L10.6 7.6V11.8H7.2V7.6Z" fill="#3f4b4a"/><path d="M6.8 5.2H10L8.8 6.8V9.5H8.2V6.8Z" fill="#a9b4b3"/><path d="M9.8 13.3H14.8M12.3 10.8V15.8" stroke="#333" stroke-width="1.2"/></svg>
<div class="btn" style="left:815px;top:858px;width:20px;height:20px;background:#f0f0f0"></div>
<svg class="ab" style="left:815px;top:858px" width="20" height="20" viewBox="0 0 20 20"><rect x="2.2" y="2" width="15.2" height="15" rx="1.5" fill="#f8f8f8" stroke="#c8c8c8" stroke-width="1"/><rect x="3.6" y="3.6" width="12.4" height="11.8" fill="#fff" stroke="#aaa" stroke-width="0.8"/><rect x="4.2" y="4.2" width="11.2" height="10.8" fill="#8c8c8c"/><rect x="4.6" y="4.8" width="1.7" height="1.5" fill="#fff"/><rect x="4.6" y="6.8999999999999995" width="1.7" height="1.5" fill="#fff"/><rect x="4.6" y="9.0" width="1.7" height="1.5" fill="#fff"/><rect x="4.6" y="11.100000000000001" width="1.7" height="1.5" fill="#fff"/><rect x="4.6" y="13.200000000000001" width="1.7" height="1.5" fill="#fff"/><rect x="6.8999999999999995" y="4.8" width="1.7" height="1.5" fill="#fff"/><rect x="6.8999999999999995" y="6.8999999999999995" width="1.7" height="1.5" fill="#fff"/><rect x="6.8999999999999995" y="9.0" width="1.7" height="1.5" fill="#fff"/><rect x="6.8999999999999995" y="11.100000000000001" width="1.7" height="1.5" fill="#fff"/><rect x="6.8999999999999995" y="13.200000000000001" width="1.7" height="1.5" fill="#fff"/><rect x="12.0" y="4.8" width="1.7" height="1.5" fill="#fff"/><rect x="12.0" y="6.8999999999999995" width="1.7" height="1.5" fill="#fff"/><rect x="12.0" y="9.0" width="1.7" height="1.5" fill="#fff"/><rect x="12.0" y="11.100000000000001" width="1.7" height="1.5" fill="#fff"/><rect x="12.0" y="13.200000000000001" width="1.7" height="1.5" fill="#fff"/><rect x="14.2" y="4.8" width="1.7" height="1.5" fill="#fff"/><rect x="14.2" y="6.8999999999999995" width="1.7" height="1.5" fill="#fff"/><rect x="14.2" y="9.0" width="1.7" height="1.5" fill="#fff"/><rect x="14.2" y="11.100000000000001" width="1.7" height="1.5" fill="#fff"/><rect x="14.2" y="13.200000000000001" width="1.7" height="1.5" fill="#fff"/><rect x="9.6" y="4.2" width="2.4" height="10.8" fill="#505050"/><rect x="10.4" y="5" width="0.9" height="9.2" fill="#9a9a9a"/></svg>
<div class="btn" style="left:839px;top:858px;width:20px;height:20px;background:#f0f0f0"></div>
<svg class="ab" style="left:839px;top:858px" width="20" height="20" viewBox="0 0 20 20"><g font-family="Liberation Sans" font-weight="bold" font-size="6.6" fill="#1a1a1a" letter-spacing="0"><text x="2.4" y="8">1</text><text x="2.4" y="13">2</text><text x="2.4" y="18">3</text></g><path d="M8 4.4H16.3M8 9.4H16.3M8 14.4H16.3" stroke="#222" stroke-width="1.25"/></svg>
<div class="btn" style="left:863px;top:858px;width:20px;height:20px;background:#f0f0f0"></div>
<svg class="ab" style="left:863px;top:858px" width="20" height="20" viewBox="0 0 20 20"><rect x="4" y="3" width="10.3" height="14.5" rx="1" fill="#d0d0d0" stroke="#6a6a6a" stroke-width="1"/><rect x="4.8" y="4.2" width="8.7" height="3" fill="#707070"/><rect x="5.6" y="5" width="6" height="1.4" fill="#a0a0a0"/><g fill="#8a8a8a"><rect x="5.4" y="8.6" width="1.4" height="1.2"/><rect x="7.4" y="8.6" width="1.4" height="1.2"/><rect x="9.4" y="8.6" width="1.4" height="1.2"/><rect x="11.4" y="8.6" width="1.4" height="1.2"/><rect x="5.4" y="10.6" width="1.4" height="1.2"/><rect x="7.4" y="10.6" width="1.4" height="1.2"/><rect x="9.4" y="10.6" width="1.4" height="1.2"/><rect x="5.4" y="12.6" width="1.4" height="1.2"/><rect x="7.4" y="12.6" width="1.4" height="1.2"/><rect x="5.4" y="14.6" width="1.4" height="1.2"/><rect x="7.4" y="14.6" width="1.4" height="1.2"/></g><path d="M14.2 10.6V17.8M10.6 14.2H17.8" stroke="#575757" stroke-width="2.6"/></svg>
<div class="btn" style="left:892px;top:858px;width:20px;height:20px;background:#f0f0f0"></div>
<svg class="ab" style="left:892px;top:858px" width="20" height="20" viewBox="0 0 20 20"><path d="M6.5 3.2L15.2 4.4L12.8 10.2L4.6 9.4Z" fill="#fff" stroke="#5a5a5a" stroke-width="1"/><path d="M8 6H11.5M7.5 7.6H10.5" stroke="#888" stroke-width="0.8"/><path d="M3 10.5Q3 9.2 4.5 9.2H15.5Q16.8 9.2 16.8 10.5V16Q16.8 17.2 15.5 17.2H4.5Q3 17.2 3 16Z" fill="#bdbdbd" stroke="#555" stroke-width="1"/><path d="M3.5 12.2H16.3" stroke="#666" stroke-width="1"/><path d="M4 13.5H11L12.5 15.5H4Z" fill="#fff"/><rect x="13.5" y="13" width="2.2" height="1.5" fill="#444"/></svg>
<div class="btn" style="left:916px;top:858px;width:20px;height:20px;background:#f0f0f0"></div>
<svg class="ab" style="left:916px;top:858px" width="20" height="20" viewBox="0 0 20 20"><rect x="3.2" y="3.6" width="14" height="13.6" fill="#e4e4e4" stroke="#5e5e5e" stroke-width="1.6"/><rect x="4.2" y="4.6" width="12" height="1.6" fill="#8c8c8c"/><path d="M6 7.5L14.5 13.8M14.5 7.5L6 13.8" stroke="#6a6a6a" stroke-width="2"/><path d="M4.3 15.2H16.1" stroke="#fff" stroke-width="1.2"/></svg>
<div class="btn" style="left:945px;top:858px;width:20px;height:20px;background:#f8f8f8"></div>
<svg class="ab" style="left:945px;top:858px" width="20" height="20" viewBox="0 0 20 20"><rect x="3.3" y="3.4" width="13.2" height="13.2" fill="#fff" stroke="#000" stroke-width="1.5"/><rect x="4.2" y="4.2" width="11.4" height="4.6" fill="#c8c8c8"/><rect x="7.5" y="8.8" width="4.5" height="7" fill="#d8d8d8"/><path d="M6.8 4V16M12.2 4V16" stroke="#9a9a9a" stroke-width="0.9"/><circle cx="14.5" cy="14.6" r="3.6" fill="#fff" stroke="#bbb" stroke-width="0.6"/><path d="M12.6 12.7L16.4 16.5M16.4 12.7L12.6 16.5" stroke="#444" stroke-width="2.6"/><path d="M12.6 12.7L16.4 16.5M16.4 12.7L12.6 16.5" stroke="#fff" stroke-width="1.4"/></svg>
<div class="red" style="left:8px;top:26px;width:209px;height:39px"></div>
<div class="red" style="left:222px;top:25px;width:82px;height:44px"></div>
<div class="red" style="left:310px;top:27px;width:237px;height:40px"></div>
<div class="red" style="left:88px;top:115px;width:232px;height:158.5px"></div>
<div class="red" style="left:782px;top:109px;width:60px;height:33px"></div>
<svg class="ab" style="left:0;top:0" width="300" height="200" viewBox="0 0 300 200"><path d="M246 76L204 144" stroke="#d9202a" stroke-width="2.2"/><path d="M198 154.5L199.5 138L211.5 145.5Z" fill="#dd1f2a"/></svg>
<div class="ab" style="left:1501px;top:890px;width:27px;height:2px;background:#a0a0a0;border-radius:2px 2px 0 0"></div>
</body></html>
